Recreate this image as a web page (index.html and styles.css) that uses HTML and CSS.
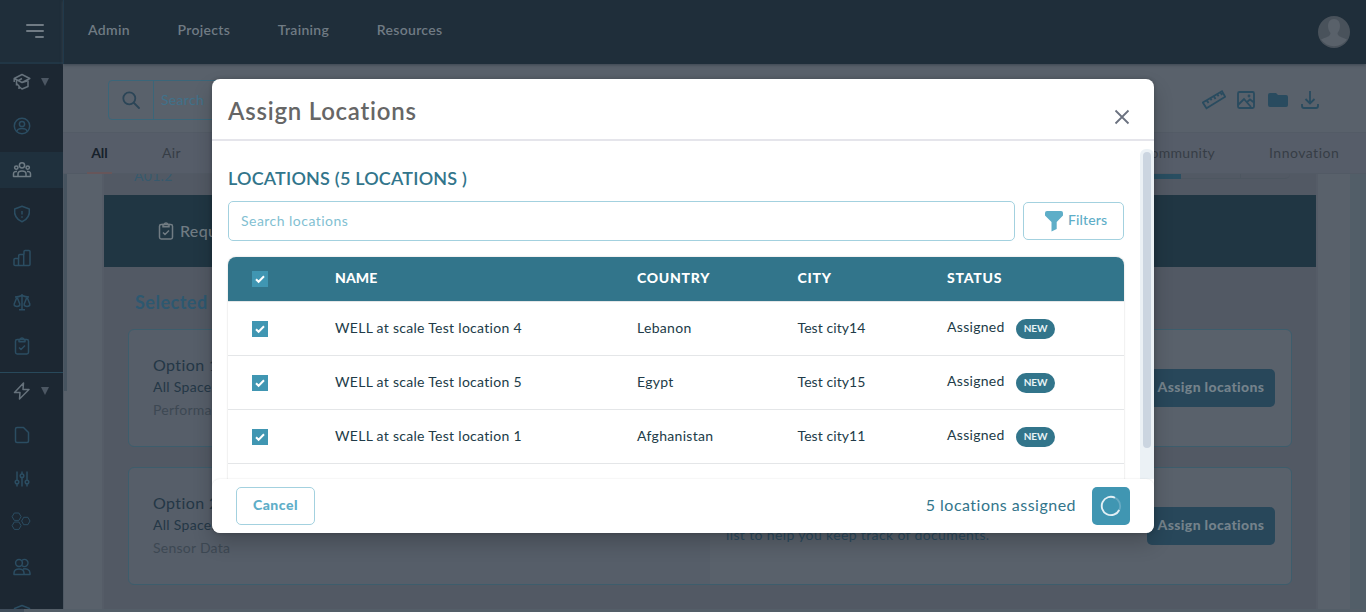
FILE: index.html
```html
<!DOCTYPE html>
<html lang="en">
<head>
<meta charset="utf-8">
<title>Assign Locations</title>
<link rel="stylesheet" href="styles.css">
</head>
<body>
<div class="app">
  <aside class="side">
    <div class="side-top"><svg width="20" height="16" viewBox="0 0 20 16"><path d="M2 2h16M2 8h16M11 14h7" stroke="#707b84" stroke-width="2" stroke-linecap="round"/></svg></div>
    <nav class="side-nav">
      <div class="item light"><svg viewBox="0 0 18 18"><path d="M9 1.500 1.200 5.500 9 9.500l7.800-4zM1.200 5.500V9M5.500 7.500 9 5.500M3.500 7.500v5M3.500 10.500 6 13v3M6 13.500l3 2.500 6-2.500v-6M9 9.500l5-1.500"/></svg><i class="caret"></i></div>
      <div class="item"><svg viewBox="0 0 18 18"><circle cx="9" cy="9" r="7.700"/><circle cx="9" cy="7" r="2.600"/><path d="M4 14.500c.4-4 9.600-4 10 0"/></svg></div>
      <div class="item light active"><svg viewBox="0 0 18 18"><circle cx="9" cy="4.300" r="2.600"/><circle cx="3.300" cy="6.600" r="1.700"/><circle cx="14.700" cy="6.600" r="1.700"/><path d="M5 15.500v-2.500c0-4 8-4 8 0v2.500zM4 10.500c-2.500-.5-3.500 1-3.500 2.500v2.500H5M14 10.500c2.500-.5 3.500 1 3.500 2.500v2.500H13"/></svg></div>
      <div class="item"><svg viewBox="0 0 18 18"><path d="M9 1.200 16.300 4C17 10 14.500 14.500 9 16.800 3.500 14.500 1 10 1.700 4z"/><path d="M9 6v3.500M9 11.200v1.500"/></svg></div>
      <div class="item"><svg viewBox="0 0 18 18"><path d="M1 16V10.500q0-1 1-1h3.500v7M5.700 9.500v-3q0-1 1-1h4v11M11 5.500V2.500q0-1 1-1h4q1 0 1 1v13q0 1-1 1H2q-1 0-1-1"/></svg></div>
      <div class="item"><svg viewBox="0 0 18 18"><path d="M9 1v15.500M6 16.700h6M2 4q3.500 0 7-1.500Q12.500 4 16 4M4 4 1 11.500M4 4l3 7.500M1 11.500c.5 2.500 5.500 2.500 6 0M14 4l-3 7.500M14 4l3 7.500M11 11.500c.5 2.500 5.500 2.500 6 0"/></svg></div>
      <div class="item"><svg viewBox="0 0 18 18"><rect x="2.500" y="2.500" width="13" height="14.500" rx="1.700"/><path d="M6 4.800V2.500h1.200c.5-2 3.100-2 3.600 0H12v2.300zM6 10.500l2 2 4-4"/></svg></div>
      <div class="rule"></div>
      <div class="item light"><svg viewBox="0 0 18 18"><path d="M10.500 1 1.500 10.500h5.500L6.500 17l9.500-9.500h-6z"/></svg><i class="caret"></i></div>
      <div class="item"><svg viewBox="0 0 18 18"><path d="M4 1.500h6.500l5 5v8.500q0 1.500-1.500 1.500H4q-1.500 0-1.500-1.500V3q0-1.500 1.500-1.500z"/></svg></div>
      <div class="item"><svg viewBox="0 0 18 18"><path d="M4 1.500v9M4 14v2.500M9 1.500V4M9 7.500v9M14 1.500v9M14 14v2.500"/><circle cx="4" cy="12" r="1.800"/><circle cx="9" cy="5.700" r="1.800"/><circle cx="14" cy="12" r="1.800"/></svg></div>
      <div class="item cells"><svg viewBox="0 0 18 18"><path d="M1.300 1h4.600l2.200 3.700-2.200 3.700H1.300L-.9 4.700zM1.300 10h4.600l2.200 3.700-2.200 3.700H1.300L-.9 13.700zM10.700 5.300h4.200L17 9l-2.100 3.700h-4.200L8.600 9z"/></svg></div>
      <div class="item people"><svg viewBox="0 0 18 18"><circle cx="6" cy="5" r="3.400"/><path d="M9 2.500a3.500 3.500 0 1 1 0 5M1 16.500v-1.500c0-5.500 10-5.500 10 0v1.500zM10 11c3-1 7 .5 7 4v1.500h-6"/></svg></div>
      <div class="item last"><svg viewBox="0 0 18 18"><path d="M1.500 6.500v-2L9 1.500l7.500 3v2M5 7l4-1.500L13 7"/></svg></div>
    </nav>
  </aside>
  <div class="page">
    <header class="top">
      <span>Admin</span><span>Projects</span><span>Training</span><span>Resources</span>
      <svg class="avatar" width="32" height="32" viewBox="0 0 32 32"><circle cx="16" cy="16" r="16" fill="#49525b"/><path d="M16 3c4 0 6 3 6 7 0 3-1 5-2.500 7 0 4 5 4 9.500 6.500a16 16 0 0 1-26 0c4.500-2.500 9.500-2.500 9.500-6.500C11 15 10 13 10 10c0-4 2-7 6-7z" fill="#59616a"/></svg>
    </header>
    <div class="tools">
      <div class="search"><div class="lens"><svg width="18" height="18" viewBox="0 0 18 18"><path d="M12 12l5 5" stroke-linecap="round"/><circle cx="7.300" cy="7.300" r="6"/></svg></div><span>Search</span></div>
      <div class="tool-icons">
        <svg class="ruler" width="24" height="20" viewBox="0 0 24 20"><path d="M.8 12.500 20 1.300l3.200 5.500L4.500 18.300zM5 10.500l1.500 2.500M8.500 8.500l1.100 1.800M12 6.500 13.500 9M15.500 4.500l1.100 1.800M18.500 2.600 20 5"/></svg>
        <svg width="20" height="20" viewBox="0 0 20 20"><rect x="2" y="2" width="16" height="16" rx="1.500"/><path d="M2 15l6-6 7 8M11 12l3-2.500 4 3"/><circle cx="13" cy="6" r=".5"/></svg>
        <svg width="20" height="20" viewBox="0 0 20 20"><path class="solid" d="M2 3h6l2 2h8q2 0 2 2v8q0 2-2 2H2q-2 0-2-2V5q0-2 2-2z"/></svg>
        <svg width="20" height="20" viewBox="0 0 20 20"><path d="M10 1v12M5.500 9l4.500 4.500L14.500 9M2 14v2q0 2 2 2h12q2 0 2-2v-2"/></svg>
      </div>
    </div>
    <div class="tabs"><span class="on">All</span><span class="air">Air</span><span class="com">Community</span><span class="inn">Innovation</span></div>
    <div class="content">
      <div class="thumb"></div>
      <main class="sheet">
        <div class="crumb"><span>A01.2</span><div class="meter"><b></b><b></b><b></b></div></div>
        <div class="band"><svg width="18" height="18" viewBox="0 0 18 18"><rect x="2.500" y="2.500" width="13" height="14.500" rx="1.700"/><path d="M6 4.800V2.500h1.200c.5-2 3.100-2 3.600 0H12v2.300zM6 10.500l2 2 4-4"/></svg><span>Requi</span></div>
        <h2>Selected</h2>
        <section class="card"><div class="info"><h3>Option 1</h3><p>All Spaces</p><small>Performance</small></div><div class="note"></div><div class="act">Assign locations</div></section>
        <section class="card"><div class="info"><h3>Option 2</h3><p>All Spaces</p><small>Sensor Data</small></div><div class="note">list to help you keep track of documents.</div><div class="act">Assign locations</div></section>
      </main>
    </div>
  </div>
  <div class="hbar"><i></i></div>
</div>

<div class="overlay">
  <div class="modal">
    <header class="m-head"><h1>Assign Locations</h1><svg width="16" height="16" viewBox="0 0 16 16"><path d="M1.500 1.500l13 13M14.500 1.500l-13 13" stroke="#6b7280" stroke-width="1.800"/></svg></header>
    <div class="m-body">
      <div class="m-main">
        <h4>LOCATIONS (5 LOCATIONS )</h4>
        <div class="filter"><div class="field">Search locations</div><div class="fbtn"><svg width="18" height="21" viewBox="0 0 18 21"><path d="M0 2Q0 0 2 0h14q2 0 2 2v2.500L11.700 11v7L6.500 20.500V11L0 4.500z" fill="#5eaec8"/></svg><span>Filters</span></div></div>
        <div class="table">
          <div class="row th"><i class="chk"><svg viewBox="0 0 16 16"><path d="M4 8.200l2.600 2.600L12 5.300"/></svg></i><span>NAME</span><span>COUNTRY</span><span>CITY</span><span>STATUS</span></div>
          <div class="row"><i class="chk"><svg viewBox="0 0 16 16"><path d="M4 8.200l2.600 2.600L12 5.300"/></svg></i><span class="name">WELL at scale Test location 4</span><span>Lebanon</span><span class="city">Test city14</span><div class="status"><span>Assigned</span><b>NEW</b></div></div>
          <div class="row"><i class="chk"><svg viewBox="0 0 16 16"><path d="M4 8.200l2.600 2.600L12 5.300"/></svg></i><span class="name">WELL at scale Test location 5</span><span>Egypt</span><span class="city">Test city15</span><div class="status"><span>Assigned</span><b>NEW</b></div></div>
          <div class="row"><i class="chk"><svg viewBox="0 0 16 16"><path d="M4 8.200l2.600 2.600L12 5.300"/></svg></i><span class="name">WELL at scale Test location 1</span><span>Afghanistan</span><span class="city">Test city11</span><div class="status"><span>Assigned</span><b>NEW</b></div></div>
        </div>
      </div>
      <div class="track"><i></i></div>
    </div>
    <footer class="m-foot"><div class="cancel">Cancel</div><span>5 locations assigned</span><div class="busy"><svg width="22" height="22" viewBox="0 0 22 22"><circle cx="11" cy="11" r="9.200" stroke="#68abc3"/><path d="M19.200 15A9.200 9.200 0 1 1 15 2.700" stroke="#e3f0f5"/></svg></div></footer>
  </div>
</div>
</body>
</html>
```
FILE: styles.css
```css
* { box-sizing: border-box; margin: 0; padding: 0; }
body { width: 1366px; height: 612px; overflow: hidden; font-family: Lato, "Open Sans", sans-serif; font-size: 14px; background: #59616b; white-space: nowrap; }
svg { display: block; flex: none; fill: none; }
.app { display: grid; grid-template-columns: 63px 1303px; grid-template-rows: 609px 3px; }
.side { background: #1c2732; overflow: hidden; }
.side-top { height: 64px; background: #1f2e3a; border-bottom: 2px solid #213645; padding: 23px 0 0 25px; }
.side-nav { display: flex; flex-direction: column; }
.item { height: 36px; margin-bottom: 8px; padding-left: 13px; display: flex; align-items: center; gap: 10px; flex: none; }
.item svg { width: 18px; height: 18px; stroke: #2b4d62; stroke-width: 1.5; stroke-linejoin: round; overflow: visible; }
.item.light svg { stroke: #66727c; }
.item.active { background: #1f303d; }
.item.active svg { stroke: #6f7c85; }
.caret { border: 4px solid transparent; border-top: 8px solid #4c5763; border-bottom: 0; }
.rule { height: 1px; background: #28495b; }
.item.cells { height: 32px; margin-bottom: 12px; }
.item.cells svg { stroke-width: 1; }
.item.people { height: 36px; }
.item.last svg { margin-top: 3px; }
.page { display: flex; flex-direction: column; min-width: 0; }
.top { height: 64px; background: #1f2e3a; border-left: 1px solid #21394a; display: flex; align-items: flex-start; padding: 21px 16px 0 24px; color: #707b84; font-weight: 600; font-size: 14px; line-height: 17px; box-shadow: 0 1px 3px #3c4650; position: relative; }
.top span { margin-right: 47.7px; letter-spacing: .3px; }
.avatar { margin: -5px 0 0 auto; }
.tools { height: 68px; background: #59616b; display: flex; justify-content: space-between; align-items: flex-start; padding: 16px 46px 0 45px; }
.search { width: 320px; height: 40px; border: 1px solid #3b6679; border-radius: 4px; display: flex; color: #40718a; font-size: 14px; line-height: 38px; }
.lens { width: 45px; border-right: 1px solid #3b6679; padding: 10px 0 0 13px; }
.lens svg { stroke: #2b4557; stroke-width: 1.8; }
.search span { padding-left: 7px; letter-spacing: .3px; }
.tool-icons { display: flex; gap: 12px; padding-top: 10px; }
.tool-icons svg { stroke: #294b5f; stroke-width: 1.8; }
.tool-icons .ruler { margin-right: -2px; }
.tool-icons .solid { fill: #294b5f; stroke: none; }
.tabs { height: 42px; background: #565d69; border-top: 1px solid #535b66; border-bottom: 1px solid #525a65; display: flex; line-height: 39px; color: #363d46; letter-spacing: .3px; }
.tabs .on { color: #17212b; font-weight: 700; margin-left: 24px; width: 25px; text-align: center; border-bottom: 2px solid #67565a; line-height: 39px; height: 41px; letter-spacing: 0; }
.tabs .air { margin-left: 50px; }
.tabs .com { margin-left: auto; width: 110px; text-align: right; }
.tabs .inn { width: 70px; margin: 0 27px 0 54px; letter-spacing: .5px; }
.content { height: 435px; display: flex; background: #59616b; border-left: 1px solid #4e5863; border-right: 16px solid #525e68; }
.thumb { width: 3px; height: 217px; background: #475460; margin-right: 37px; }
.sheet { width: 1212px; height: 435px; background: #525964; flex: none; outline: 2px solid #555c67; clip-path: inset(0 -2px); }
.crumb { height: 21px; display: flex; justify-content: space-between; padding: 0 26px 0 30px; color: #36596d; line-height: 4px; }
.crumb span { letter-spacing: .3px; }
.meter { display: flex; height: 5px; width: 176px; border-bottom: 1px solid #4d5660; border-radius: 0 0 8px 0; }
.meter b { width: 60px; }
.meter b:first-child { width: 67px; height: 5px; flex: none; background: #294e61; }
.meter b:nth-child(2) { border-right: 1px solid #4d5660; flex: none; }
.band { height: 72px; background: #203643; display: flex; align-items: center; padding-left: 53px; gap: 5px; color: #717c83; font-size: 16px; }
.band svg { stroke: #717c83; stroke-width: 1.5; }
.band span { letter-spacing: .3px; padding-bottom: 2px; font-weight: 500; }
h2 { font-size: 18px; line-height: 22px; color: #2d5870; padding: 24px 0 0 31px; height: 62px; letter-spacing: .5px; }
.card { margin: 0 24px 20px; height: 118px; border: 1px solid #3d5d6c; border-radius: 6px; background: linear-gradient(90deg, #565e69 581px, #59616b 581px); display: flex; color: #243746; }
.info { width: 581px; padding: 25px 0 0 24px; }
h3 { font-size: 16px; font-weight: 400; line-height: 20px; letter-spacing: .4px; }
.info p { line-height: 20px; padding-top: 2px; letter-spacing: .3px; }
.info small { display: block; font-size: 14px; line-height: 20px; margin-top: 3px; color: #3d4853; letter-spacing: .25px; }
.note { width: 437px; padding: 57px 0 0 16px; line-height: 20px; color: #2b4a5e; letter-spacing: .37px; }
.act { width: 128px; height: 38px; margin-top: 39px; border-radius: 5px; background: #28475a; color: #74828b; font-weight: 900; font-size: 14px; line-height: 36px; text-align: center; letter-spacing: .35px; }
.hbar { grid-column: 1 / 3; background: #545e68; }
.hbar i { display: block; width: 24px; height: 3px; background: #404d5b; }

.overlay { position: absolute; inset: 0; display: flex; align-items: center; justify-content: center; }
.modal { width: 942px; height: 454px; border-radius: 8px; background: #fff; overflow: hidden; box-shadow: 0 10px 20px rgba(0, 0, 0, .2), 0 0 4px rgba(0, 0, 0, .2); }
.m-head { height: 62px; border-bottom: 2px solid #e5e5eb; display: flex; justify-content: space-between; padding: 16px 24px 0 16px; }
.m-head svg { margin-top: 14px; }
h1 { font-size: 24px; line-height: 31px; font-weight: 600; color: #666; letter-spacing: .76px; }
.m-body { height: 338px; display: flex; justify-content: space-between; overflow: hidden; }
.m-main { width: 912px; padding: 27px 0 0 16px; }
h4 { font-size: 18px; line-height: 21px; font-weight: 600; color: #32758b; height: 33px; letter-spacing: .2px; }
.filter { display: flex; gap: 8px; align-items: center; height: 40px; margin-bottom: 16px; }
.field { width: 787px; height: 40px; border: 1px solid #a3d1df; border-radius: 5px; padding-left: 12px; line-height: 38px; color: #82bfd2; letter-spacing: .47px; }
.fbtn { width: 101px; height: 38px; border: 1px solid #a3d1df; border-radius: 5px; display: flex; padding: 8px 0 0 21px; gap: 5px; line-height: 18px; color: #5eaec8; }
.fbtn span { letter-spacing: .15px; font-weight: 500; }
.table { width: 896px; border-radius: 8px 8px 0 0; box-shadow: 0 0 2px rgba(0, 0, 0, .2); height: 300px; }
.row { display: grid; grid-template-columns: 83px 302px 160.500px 149.500px 1fr; padding-left: 24px; height: 54px; border-bottom: 1px solid #e4e6e8; align-items: center; color: #213b48; letter-spacing: .3px; }
.row > span { line-height: 18px; padding-bottom: 2px; }
.row.th { height: 45px; border-bottom: 1px solid #e4e6e8; background: #32758b; background-clip: padding-box; color: #fff; border-radius: 8px 8px 0 0; font-weight: 900; letter-spacing: .75px; }
.row.th > span:nth-child(2) { letter-spacing: .1px; }
.row .name { letter-spacing: .29px; }
.row .city { letter-spacing: .08px; }
.chk { width: 16px; height: 16px; background: #4096b2; }
.row:not(.th) .chk { margin-top: 1px; }
.chk svg { width: 16px; height: 16px; stroke: #fff; stroke-width: 2; }
.status { display: flex; align-items: center; gap: 12px; }
.status span { padding-bottom: 4px; width: 57px; }
.status b { width: 39px; height: 20px; margin-top: 1px; border-radius: 10px; background: #32758b; color: #e8f3f6; font-size: 10px; line-height: 19px; text-align: center; letter-spacing: -.1px; }
.track { width: 14px; background: #ebf1f5; margin-top: 8px; border-radius: 6px 6px 0 0; padding: 3px 0 0 3px; }
.track i { display: block; width: 8px; height: 296px; border-radius: 4px; background: #cbd5e0; }
.m-foot { height: 54px; display: flex; align-items: center; padding: 0 24px; border-radius: 8px; box-shadow: 0 0 2px rgba(0, 0, 0, .12); background: #fff; position: relative; }
.cancel { width: 79px; height: 38px; border: 1px solid #a3d1df; border-radius: 5px; color: #5eaec8; font-weight: 900; text-align: center; line-height: 34px; letter-spacing: .5px; }
.m-foot span { margin-left: auto; font-size: 16px; color: #32758b; letter-spacing: .48px; padding-bottom: 3px; margin-right: 16px; }
.busy { width: 38px; height: 38px; border-radius: 5px; background: #4096b2; padding: 8px; }
.busy svg { stroke-width: 1.800; }
```
